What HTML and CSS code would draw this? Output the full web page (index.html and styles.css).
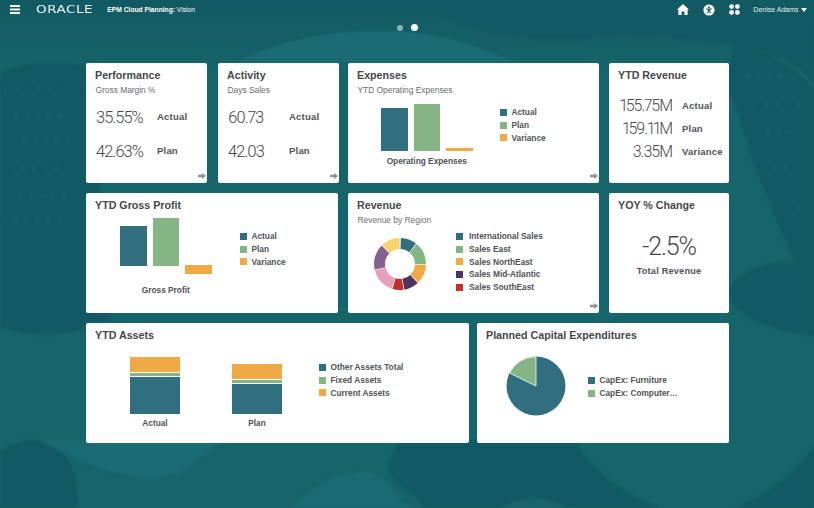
FILE: index.html
```html
<!DOCTYPE html>
<html lang="en">
<head>
  <meta charset="UTF-8">
  <meta name="viewport" content="width=device-width, initial-scale=1.0">
  <title>EPM Cloud Planning: Vision</title>
  <link rel="stylesheet" href="styles.css">
</head>
<body>
  <svg class="backdrop" viewBox="0 0 814 508" aria-hidden="true">
    <path class="dark" d="M0 72 C30 62 60 58 90 68 L110 320 C70 338 30 338 0 326 Z"/>
    <path class="dark" d="M0 452 C20 436 50 436 66 456 C76 472 78 490 78 508 L0 508 Z"/>
    <path class="dark" d="M425 0 C450 28 520 44 590 38 C640 32 700 40 740 46 C775 52 800 64 814 84 L814 0 Z"/>
    <path class="dark" d="M734 44 C770 50 800 70 814 90 L814 292 C790 262 770 200 752 160 C745 130 735 100 725 90 Z"/>
    <path class="dark" d="M730 285 C755 258 790 262 814 262 L814 336 C780 332 745 322 730 300 Z"/>
    <path class="dark" d="M400 440 L575 440 C590 470 625 495 660 508 L570 508 C545 495 520 495 500 508 L425 508 C410 490 390 480 388 470 C390 458 395 450 400 440 Z"/>
    <path class="dark" d="M814 446 C795 470 770 495 735 508 L814 508 Z"/>
    <path class="light" d="M290 508 C310 490 335 470 350 475 C370 465 385 475 400 500 L412 508 Z"/>
    <path class="light" d="M40 440 C90 470 150 490 185 470 C200 460 215 445 225 440 Z"/>
    <path class="light" d="M240 60 C300 30 400 20 470 45 L520 63 L240 63 Z"/>
    <g class="digits">
      <text x="4" y="92">0   1  0   0  1  0</text>
      <text x="14" y="118">1  0   1  0  0</text>
      <text x="22" y="142">0  0   1  0  1</text>
      <text x="10" y="172">1   0  0  1  0</text>
      <text x="18" y="200">0  1   0  0   1</text>
      <text x="2" y="222">1  0   0  1  0  0</text>
      <text x="745" y="78">0   1  0  0</text>
      <text x="752" y="108">1  0   0  1  0</text>
      <text x="765" y="135">0  1   0</text>
      <text x="772" y="170">1  0  0</text>
      <text x="785" y="210">0  1</text>
    </g>
  </svg>

  <header class="topbar">
    <svg class="hamburger" viewBox="0 0 10 9"><path d="M0 0h10v2H0zM0 3.5h10v2H0zM0 7h10v2H0z"/></svg>
    <span class="logo">ORACLE</span>
    <span class="app-name"><b>EPM Cloud Planning:</b> Vision</span>
    <div class="top-icons">
      <svg class="icon-home" viewBox="0 0 12 11"><path d="M6 0 12 5.6 10.6 5.6V11H7.4V7.4H4.6V11H1.4V5.6H0Z"/></svg>
      <svg class="icon-access" viewBox="0 0 12 12"><circle cx="6" cy="6" r="5.6" fill="#fff"/><circle cx="6" cy="3.2" r="1" fill="#17636a"/><path d="M2.9 4.5H9.1V5.2L7 5.8 7.9 9.4H6.9L6 7.1 5.1 9.4H4.1L5 5.8 2.9 5.2Z" fill="#17636a"/></svg>
      <svg class="icon-apps" viewBox="0 0 11 11"><circle cx="2.6" cy="2.6" r="2.4"/><circle cx="8.4" cy="2.6" r="2.4"/><circle cx="2.6" cy="8.4" r="2.4"/><circle cx="8.4" cy="8.4" r="2.4"/></svg>
    </div>
    <span class="user">Denise Adams</span>
    <span class="caret"></span>
  </header>

  <div class="pager">
    <span class="dot"></span>
    <span class="dot active"></span>
  </div>

  <main class="board">
    <div class="row">
      <section class="card w-s">
        <h3>Performance</h3>
        <p class="sub">Gross Margin %</p>
        <div class="metrics">
          <div class="metric"><span class="num">35.55%</span><span class="lbl">Actual</span></div>
          <div class="metric"><span class="num">42.63%</span><span class="lbl">Plan</span></div>
        </div>
        <svg class="more" viewBox="0 0 8 6"><path d="M0 1.8H4V0L8 3 4 6V4.2H0Z"/></svg>
      </section>

      <section class="card w-s">
        <h3>Activity</h3>
        <p class="sub">Days Sales</p>
        <div class="metrics">
          <div class="metric"><span class="num">60.73</span><span class="lbl">Actual</span></div>
          <div class="metric"><span class="num">42.03</span><span class="lbl">Plan</span></div>
        </div>
        <svg class="more" viewBox="0 0 8 6"><path d="M0 1.8H4V0L8 3 4 6V4.2H0Z"/></svg>
      </section>

      <section class="card w-m">
        <h3>Expenses</h3>
        <p class="sub">YTD Operating Expenses</p>
        <div class="chart expenses">
          <div class="bars-wrap">
            <div class="bars">
              <div class="bar teal" style="height:43px"></div>
              <div class="bar green" style="height:47px"></div>
              <div class="bar orange" style="height:3px"></div>
            </div>
            <div class="axis">Operating Expenses</div>
          </div>
          <ul class="legend">
            <li><i class="teal"></i>Actual</li>
            <li><i class="green"></i>Plan</li>
            <li><i class="orange"></i>Variance</li>
          </ul>
        </div>
        <svg class="more" viewBox="0 0 8 6"><path d="M0 1.8H4V0L8 3 4 6V4.2H0Z"/></svg>
      </section>

      <section class="card w-r">
        <h3>YTD Revenue</h3>
        <div class="rev-table">
          <span class="num">155.75M</span><span class="lbl">Actual</span>
          <span class="num">159.11M</span><span class="lbl">Plan</span>
          <span class="num">3.35M</span><span class="lbl">Variance</span>
        </div>
      </section>
    </div>

    <div class="row">
      <section class="card w-d">
        <h3>YTD Gross Profit</h3>
        <div class="chart profit">
          <div class="bars-wrap">
            <div class="bars">
              <div class="bar teal" style="height:40px"></div>
              <div class="bar green" style="height:48px"></div>
              <div class="bar orange below" style="height:9px"></div>
            </div>
            <div class="axis">Gross Profit</div>
          </div>
          <ul class="legend">
            <li><i class="teal"></i>Actual</li>
            <li><i class="green"></i>Plan</li>
            <li><i class="orange"></i>Variance</li>
          </ul>
        </div>
      </section>

      <section class="card w-m">
        <h3>Revenue</h3>
        <p class="sub">Revenue by Region</p>
        <div class="chart region">
          <svg class="donut" viewBox="0 0 54 54">
            <g fill="none" stroke-width="11" transform="rotate(-90 27 27)">
              <circle cx="27" cy="27" r="20.5" pathLength="360" stroke="#2f6f80" stroke-dasharray="36 324" stroke-dashoffset="-2"/>
              <circle cx="27" cy="27" r="20.5" pathLength="360" stroke="#85b585" stroke-dasharray="50 310" stroke-dashoffset="-40"/>
              <circle cx="27" cy="27" r="20.5" pathLength="360" stroke="#efaa45" stroke-dasharray="43 317" stroke-dashoffset="-92"/>
              <circle cx="27" cy="27" r="20.5" pathLength="360" stroke="#4f3460" stroke-dasharray="33 327" stroke-dashoffset="-137"/>
              <circle cx="27" cy="27" r="20.5" pathLength="360" stroke="#c62f2a" stroke-dasharray="25 335" stroke-dashoffset="-172"/>
              <circle cx="27" cy="27" r="20.5" pathLength="360" stroke="#e6a0bb" stroke-dasharray="56 304" stroke-dashoffset="-199"/>
              <circle cx="27" cy="27" r="20.5" pathLength="360" stroke="#86608f" stroke-dasharray="58 302" stroke-dashoffset="-257"/>
              <circle cx="27" cy="27" r="20.5" pathLength="360" stroke="#f6d36b" stroke-dasharray="42 318" stroke-dashoffset="-317"/>
            </g>
          </svg>
          <ul class="legend">
            <li><i class="teal"></i>International Sales</li>
            <li><i class="green"></i>Sales East</li>
            <li><i class="orange"></i>Sales NorthEast</li>
            <li><i class="plum"></i>Sales Mid-Atlantic</li>
            <li><i class="red"></i>Sales SouthEast</li>
          </ul>
        </div>
        <svg class="more" viewBox="0 0 8 6"><path d="M0 1.8H4V0L8 3 4 6V4.2H0Z"/></svg>
      </section>

      <section class="card w-r">
        <h3>YOY % Change</h3>
        <div class="yoy">
          <span class="big">-2.5%</span>
          <span class="lbl">Total Revenue</span>
        </div>
      </section>
    </div>

    <div class="row tight">
      <section class="card w-a">
        <h3>YTD Assets</h3>
        <div class="chart assets">
          <div class="stack-col">
            <div class="stack">
              <div class="seg orange" style="height:15px"></div>
              <div class="seg green" style="height:3px"></div>
              <div class="seg teal" style="height:37px"></div>
            </div>
            <div class="axis">Actual</div>
          </div>
          <div class="stack-col">
            <div class="stack">
              <div class="seg orange" style="height:15px"></div>
              <div class="seg green" style="height:3px"></div>
              <div class="seg teal" style="height:30px"></div>
            </div>
            <div class="axis">Plan</div>
          </div>
          <ul class="legend">
            <li><i class="teal"></i>Other Assets Total</li>
            <li><i class="green"></i>Fixed Assets</li>
            <li><i class="orange"></i>Current Assets</li>
          </ul>
        </div>
      </section>

      <section class="card w-c">
        <h3>Planned Capital Expenditures</h3>
        <div class="chart capex">
          <svg class="pie" viewBox="-30 -30 60 60">
            <circle r="29.5" fill="#2f6f80"/>
            <path d="M0 0V-29.5A29.5 29.5 0 0 0 -26.5 -13Z" fill="#85b585" stroke="#fff" stroke-width=".8"/>
          </svg>
          <ul class="legend">
            <li><i class="teal"></i>CapEx: Furniture</li>
            <li><i class="green"></i>CapEx: Computer…</li>
          </ul>
        </div>
      </section>
    </div>
  </main>
</body>
</html>
```

FILE: styles.css
```css
html, body {
  margin: 0;
  height: 508px;
  overflow: hidden;
}
body {
  position: relative;
  background: linear-gradient(#125a63, #17646b 70px);
  font-family: "Liberation Sans", Arial, sans-serif;
}
.backdrop {
  position: absolute;
  top: 0;
  left: 0;
  width: 814px;
  height: 508px;
  filter: blur(1px);
}
.backdrop .dark {
  fill: #125a63;
}
.backdrop .light {
  fill: #1a6b72;
}
.digits {
  font-family: "Liberation Mono", monospace;
  font-size: 9px;
  fill: #196670;
  white-space: pre;
}

.topbar, .pager, .board {
  position: relative;
}
.topbar {
  display: flex;
  align-items: center;
  height: 19px;
  padding-left: 10px;
  color: #fff;
}
.hamburger {
  width: 10px;
  height: 9px;
  fill: #f2f6f6;
}
.logo {
  margin-left: 16px;
  font-family: "DejaVu Sans", sans-serif;
  font-size: 10px;
  letter-spacing: .4px;
  color: #eef3f3;
  transform: scaleX(1.35);
  transform-origin: left center;
}
.app-name {
  margin-left: 29px;
  font-size: 6.7px;
  white-space: nowrap;
}
.top-icons {
  display: flex;
  align-items: center;
  gap: 14px;
  margin-left: auto;
}
.top-icons svg {
  fill: #fff;
}
.icon-home {
  width: 12px;
  height: 11px;
}
.icon-access {
  width: 12px;
  height: 12px;
}
.icon-apps {
  width: 11px;
  height: 11px;
}
.user {
  margin-left: 13px;
  font-size: 7px;
  color: #e6eeee;
  white-space: nowrap;
}
.caret {
  margin: 1px 7px 0 2.5px;
  border-left: 3px solid transparent;
  border-right: 3px solid transparent;
  border-top: 4px solid #fff;
}

.pager {
  display: flex;
  justify-content: center;
  align-items: center;
  gap: 8px;
  height: 7px;
  margin-top: 5px;
}
.dot {
  width: 6px;
  height: 6px;
  border-radius: 50%;
  background-color: #8fb1b7;
}
.dot.active {
  width: 7px;
  height: 7px;
  background-color: #fff;
}

.board {
  display: flex;
  flex-direction: column;
  gap: 10px;
  width: 643px;
  margin: 32px 0 0 86px;
}
.row {
  display: flex;
  gap: 10px;
}
.row.tight {
  gap: 8px;
}
.card {
  position: relative;
  box-sizing: border-box;
  height: 120px;
  padding: 6px 9px;
  background-color: #fff;
  border-radius: 2px;
  color: #4b4d50;
}
.w-s { width: 121px; }
.w-m { width: 251px; }
.w-r { width: 120px; }
.w-d { width: 252px; }
.w-a { width: 383px; }
.w-c { width: 252px; }
.w-s + .w-s { margin-left: 1px; }
.w-s + .w-m { margin-left: -1px; }

.card h3 {
  margin: 0;
  font-size: 10.7px;
  line-height: 13px;
  color: #46484b;
}
.sub {
  margin: 2px 0 0 .5px;
  font-size: 8.4px;
  line-height: 12px;
  color: #6b6d70;
}
.num, .big {
  font-family: Roboto, sans-serif;
  font-weight: 300;
  color: #47494c;
  font-variant-numeric: proportional-nums;
}
.lbl {
  font-size: 9.5px;
  font-weight: bold;
  letter-spacing: .2px;
  color: #505256;
}
.axis, .legend {
  font-size: 8.3px;
  font-weight: bold;
  color: #505256;
}
.more {
  position: absolute;
  right: 1px;
  bottom: 4px;
  width: 8px;
  height: 6px;
  fill: #8f9294;
}

.metrics {
  display: flex;
  flex-direction: column;
  gap: 13px;
  margin: 11px 0 0 1px;
}
.metric {
  display: flex;
  align-items: center;
  height: 21px;
}
.metric .num {
  width: 61px;
  font-size: 16.5px;
  letter-spacing: -1px;
}
.metric .lbl {
  margin-top: -2px;
}

.rev-table {
  display: grid;
  grid-template-columns: 52px auto;
  column-gap: 10px;
  row-gap: 5px;
  align-items: center;
  margin: 15px 0 0 2px;
  white-space: nowrap;
}
.rev-table .num {
  justify-self: end;
  height: 18px;
  font-size: 16px;
  line-height: 18px;
  letter-spacing: -1px;
}
.rev-table .lbl {
  margin-top: -2px;
}

.yoy {
  display: flex;
  flex-direction: column;
  align-items: center;
  gap: 4px;
  margin-top: 20px;
}
.yoy .lbl {
  font-size: 9.2px;
}
.big {
  font-size: 25px;
  line-height: 30px;
  letter-spacing: -1.2px;
}

.chart {
  display: flex;
}
.bars-wrap {
  display: flex;
  flex-direction: column;
  align-items: center;
}
.bars {
  display: flex;
  align-items: flex-end;
  gap: 6px;
}
.bar {
  width: 26.5px;
}
.bar.below {
  margin-bottom: -8px;
}
.axis {
  text-align: center;
  white-space: nowrap;
}
.teal { background-color: #2f6f80; }
.green { background-color: #85b585; }
.orange { background-color: #efaa45; }
.plum { background-color: #4f3460; }
.red { background-color: #c62f2a; }

.legend {
  margin: 0;
  padding: 0;
  list-style: none;
  line-height: 12.8px;
  white-space: nowrap;
}
.legend li {
  display: flex;
  align-items: center;
}
.legend i {
  width: 7px;
  height: 7px;
  margin-right: 4.5px;
}

.expenses {
  margin: 8px 0 0 24px;
}
.expenses .axis {
  margin-top: 5px;
}
.expenses .legend {
  margin: 2px 0 0 27.5px;
}

.profit {
  margin: 6px 0 0 25px;
}
.profit .axis {
  margin-top: 19px;
}
.profit .legend {
  margin: 12px 0 0 28.5px;
}

.region {
  align-items: flex-start;
  margin-top: 6px;
}
.donut {
  width: 54px;
  height: 54px;
  margin: 5px 0 0 16px;
}
.region .legend {
  margin: -2px 0 0 29px;
}
.region .legend i {
  margin-right: 6px;
}

.assets {
  margin-top: 13px;
  padding-left: 35px;
}
.stack-col {
  display: flex;
  flex-direction: column;
  align-items: center;
  justify-content: flex-end;
  width: 50px;
  height: 73px;
  margin-right: 52px;
}
.stack {
  width: 50px;
}
.seg {
  margin-top: 1px;
}
.stack-col .axis {
  margin-top: 4px;
}
.assets .legend {
  margin: 6px 0 0 -15px;
}

.capex {
  align-items: center;
  margin-top: 14px;
  padding-left: 20px;
}
.pie {
  width: 60px;
  height: 60px;
}
.capex .legend {
  margin: 2px 0 0 22px;
}
```
